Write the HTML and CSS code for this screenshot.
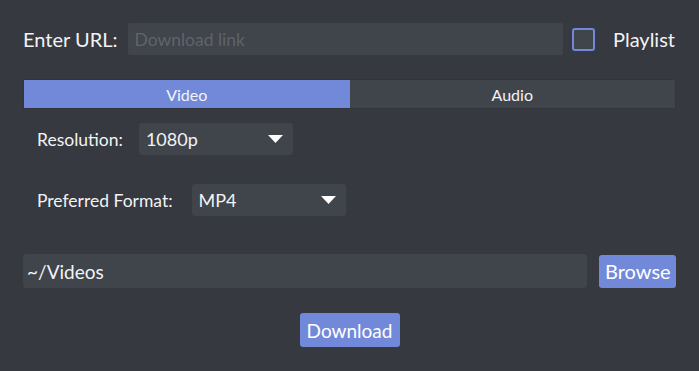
FILE: index.html
```html
<!DOCTYPE html>
<html lang="en">
<head>
  <meta charset="UTF-8" />
  <title>Downloader</title>
  <link rel="stylesheet" href="styles.css">
</head>
<body>
  <main class="app">
    <div class="url-row">
      <label class="url-label" for="url">Enter URL:</label>
      <input class="field url-input" id="url" type="text" placeholder="Download link">
      <span class="check"></span>
      <span class="check-label">Playlist</span>
    </div>

    <div class="tabs">
      <div class="tab active">Video</div>
      <div class="tab">Audio</div>
    </div>

    <div class="options">
      <div class="opt-row">
        <span class="opt-label">Resolution:</span>
        <div class="select">
          <span>1080p</span>
          <svg class="arrow" width="15" height="8" viewBox="0 0 15 8"><path d="M0 0 H15 L7.5 8 Z" fill="#fff"/></svg>
        </div>
      </div>
      <div class="opt-row second">
        <span class="opt-label">Preferred Format:</span>
        <div class="select">
          <span>MP4</span>
          <svg class="arrow" width="15" height="8" viewBox="0 0 15 8"><path d="M0 0 H15 L7.5 8 Z" fill="#fff"/></svg>
        </div>
      </div>
    </div>

    <div class="path-row">
      <input class="field path-input" type="text" value="~/Videos">
      <button class="btn browse">Browse</button>
    </div>

    <div class="dl-row">
      <button class="btn download">Download</button>
    </div>
  </main>
</body>
</html>
```

FILE: styles.css
```css
*, *::before, *::after {
  box-sizing: border-box;
}

* {
  margin: 0;
}

body {
  background: #36393f;
  color: #f2f3f5;
  font-family: 'Lato', 'Open Sans', sans-serif;
  -webkit-font-smoothing: antialiased;
}

input, button {
  font: inherit;
}

.app {
  padding: 23px 23px 0 23px;
}

.url-row {
  display: flex;
  align-items: center;
  height: 32px;
}

.url-label {
  font-size: 20px;
  margin-right: 11px;
}

.field {
  background: #40444b;
  border: none;
  outline: none;
  border-radius: 3px;
  color: #f2f3f5;
}

.url-input {
  flex: 1;
  height: 32px;
  font-size: 17.5px;
  padding: 0 6px;
  border-radius: 2px;
}

.url-input::placeholder {
  color: #5f636a;
}

.check {
  width: 23px;
  height: 23px;
  margin-left: 9px;
  border: 2px solid #7289da;
  border-radius: 3px;
  background: #40444b;
}

.check-label {
  font-size: 20px;
  margin-left: 18px;
  margin-right: 1px;
}

.tabs {
  display: grid;
  grid-template-columns: 1fr 1fr;
  margin-top: 24px;
  height: 30px;
  border: 1px solid #32353a;
}

.tab {
  display: flex;
  align-items: center;
  justify-content: center;
  font-size: 16px;
  background: #40444b;
}

.tab.active {
  background: #7289da;
}

.options {
  padding-left: 14px;
  margin-top: 14px;
}

.opt-row {
  display: flex;
  align-items: center;
  font-size: 17.5px;
}

.opt-row.second {
  margin-top: 29px;
}

.opt-label {
  margin-right: 16px;
}

.second .opt-label {
  margin-right: 19px;
}

.select {
  display: flex;
  align-items: center;
  justify-content: space-between;
  width: 154px;
  height: 32px;
  padding: 0 10px 0 7px;
  background: #40444b;
  border-radius: 3px;
  font-size: 18px;
}

.path-row {
  display: flex;
  align-items: center;
  gap: 12px;
  margin-top: 38px;
}

.path-input {
  flex: 1;
  height: 34px;
  font-size: 19px;
  padding: 0 4px;
}

.btn {
  background: #7289da;
  color: #fff;
  border: none;
  border-radius: 3px;
  font-size: 20px;
  cursor: pointer;
}

.browse {
  width: 77px;
  height: 33px;
}

.dl-row {
  display: flex;
  justify-content: center;
  margin-top: 25px;
}

.download {
  width: 100px;
  height: 34px;
  font-size: 19px;
}
```
